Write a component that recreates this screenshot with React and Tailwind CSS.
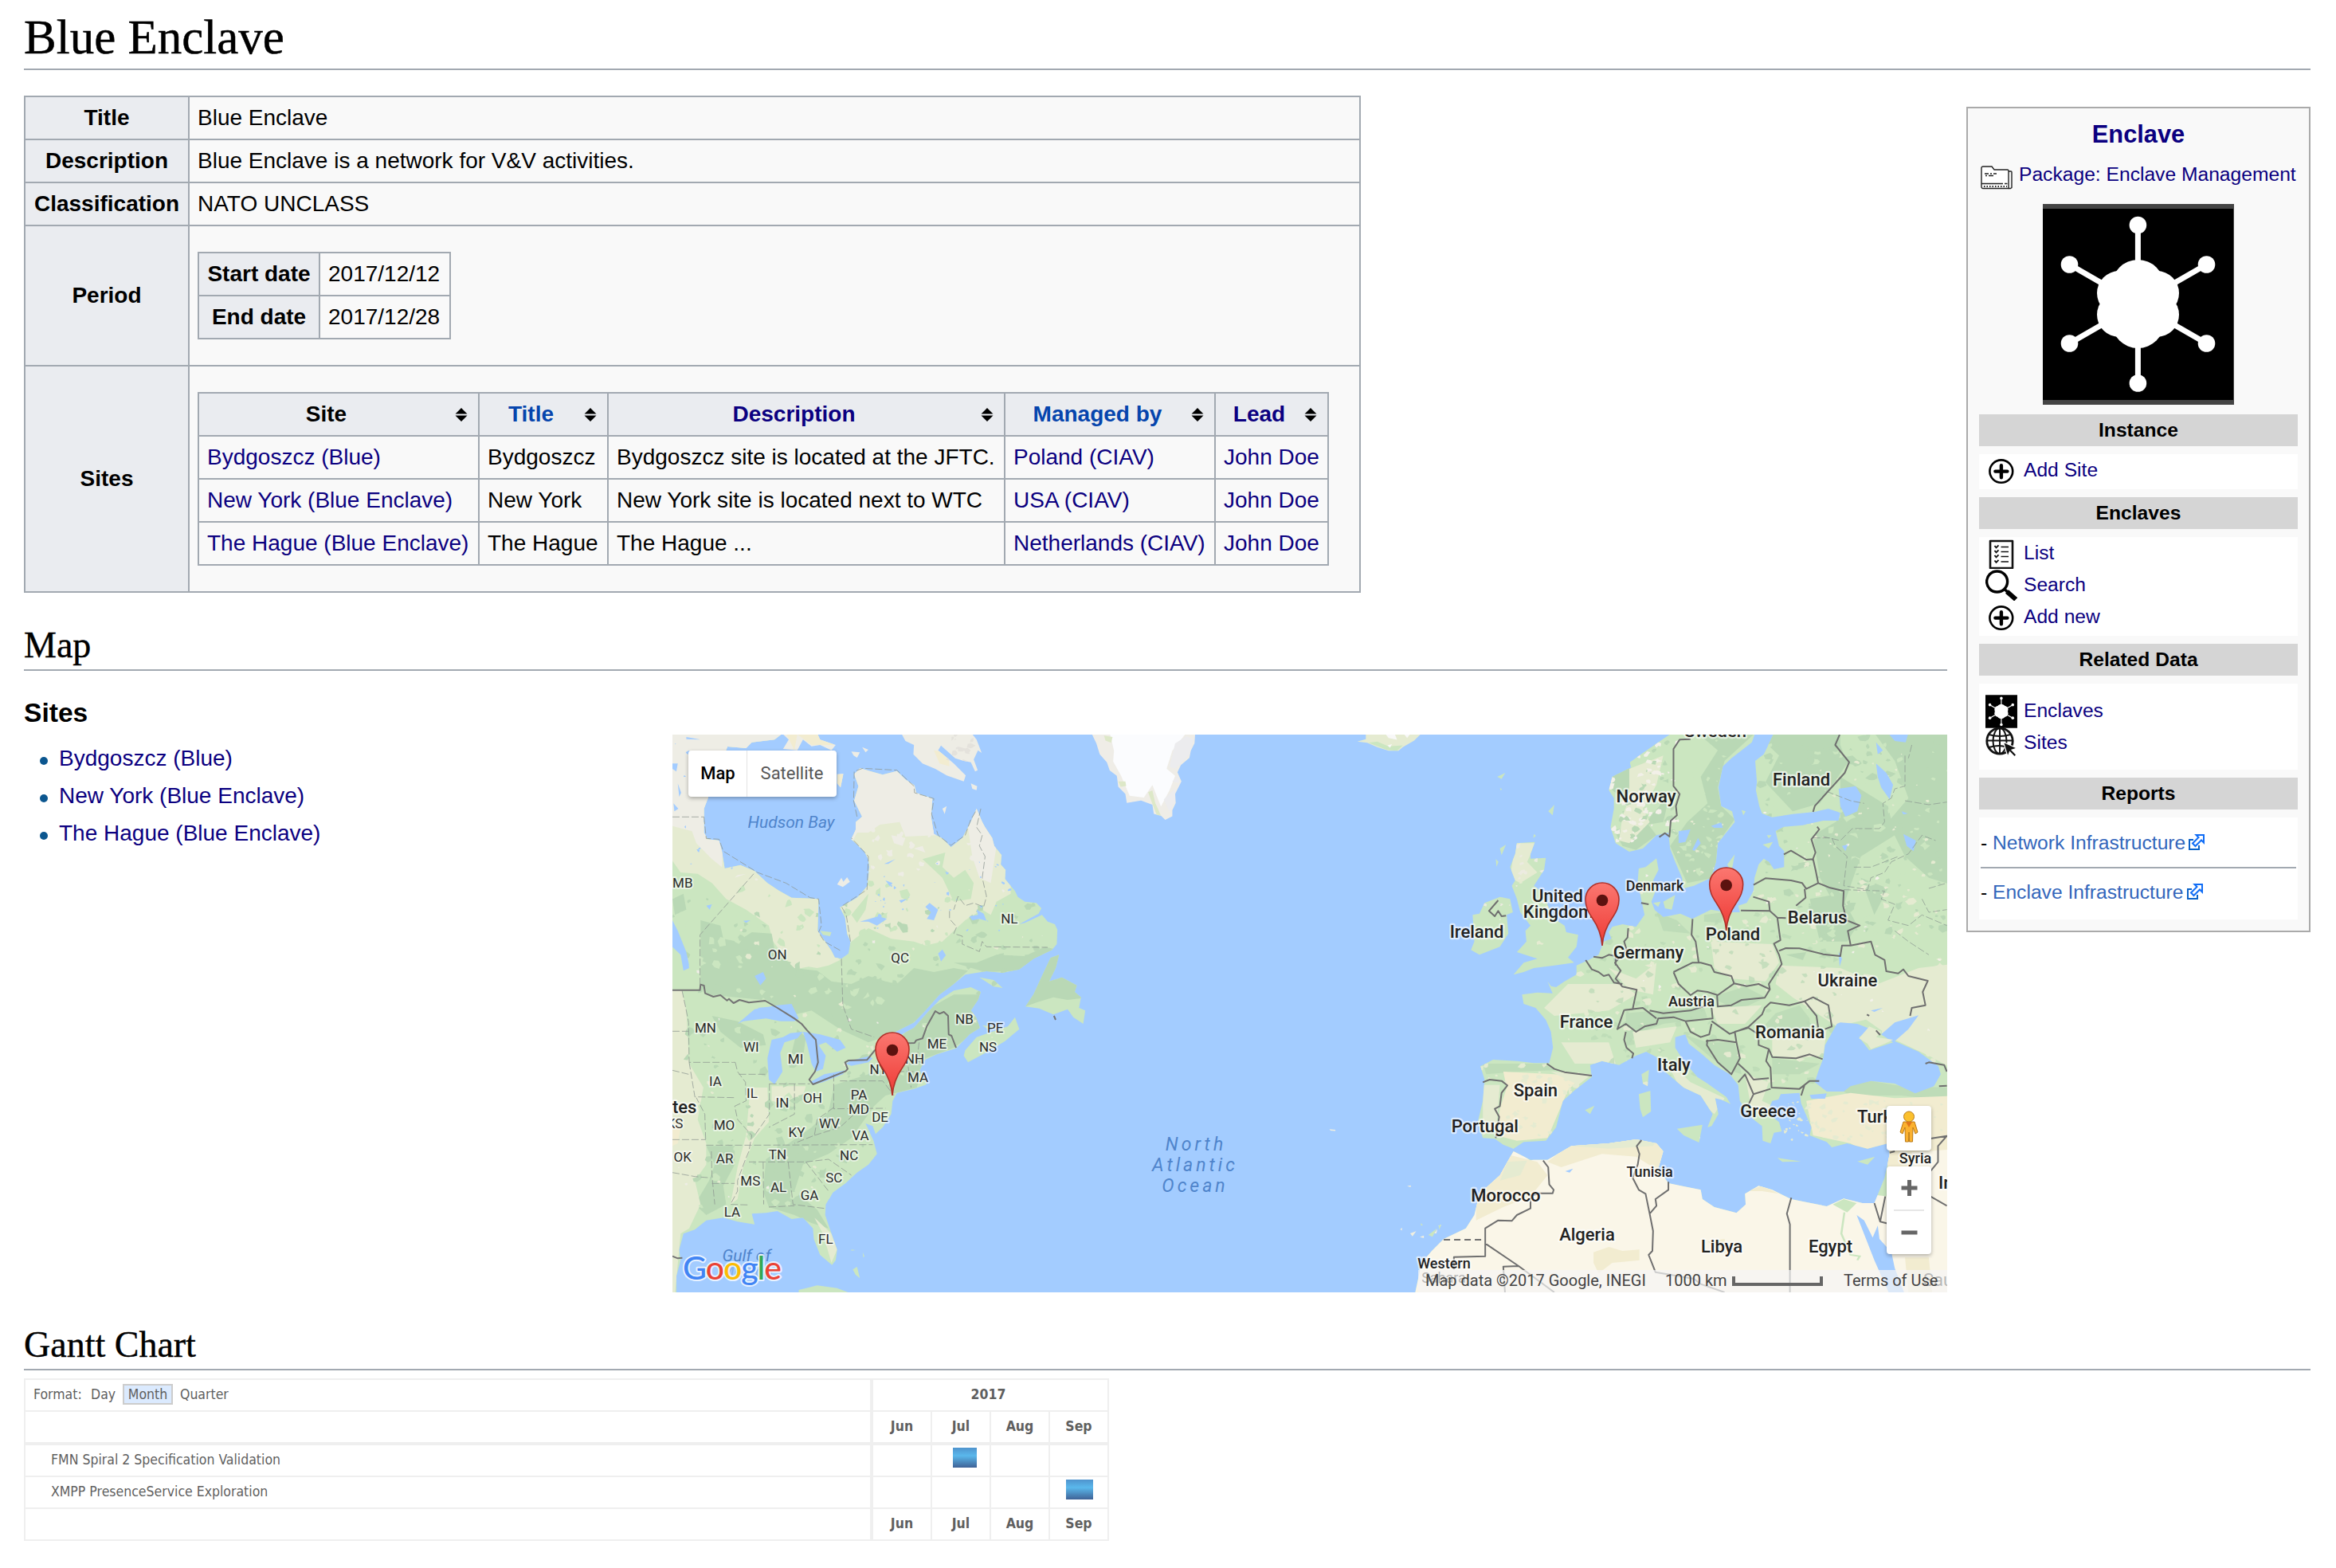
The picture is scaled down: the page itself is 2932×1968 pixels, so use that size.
import React from "react";

const SANS = "font-['Liberation_Sans',Arial,sans-serif]";
const SERIF = "font-['Liberation_Serif',Georgia,serif]";

/* ---------- small icons ---------- */

const Sorter = () => (
  <svg viewBox="0 0 16 17" className="h-[17px] w-4 shrink-0">
    <path d="M8 0L15.5 7.6H.5zM8 17L.5 9.6h15z" />
  </svg>
);

const PlusIcon = () => (
  <svg viewBox="0 0 40 40" className="h-10 w-10 shrink-0" fill="none" stroke="#000">
    <ellipse cx="19.8" cy="21.6" rx="14.4" ry="14.2" strokeWidth="2.6" />
    <path d="M12.4 21.6h15M19.9 14.2v15" strokeWidth="4.4" strokeLinecap="round" />
  </svg>
);

const ListIcon = () => (
  <svg viewBox="0 0 40 40" className="h-10 w-10 shrink-0" fill="none" stroke="#111">
    <path d="M6 5h28v34H6z" strokeWidth="2.6" strokeLinejoin="round" />
    <path d="M19.5 12.5H29M19.5 18.5H29M19.5 24.5H29M19.5 31H29" strokeWidth="1.6" />
    <path d="M11.5 11l2 2.4 3-3M11.5 17l2 2.4 3-3M11.5 23l2 2.4 3-3M11.5 29.500l2 2.400 3-3" strokeWidth="1.900" />
  </svg>
);

const SearchIcon = () => (
  <svg viewBox="0 0 40 40" className="h-10 w-10 shrink-0" fill="none" stroke="#000">
    <circle cx="14.600" cy="16" r="13" strokeWidth="3.400" />
    <path d="M24.500 26l3.500 3.300" strokeWidth="3.600" />
    <path d="M27 28.500l11.200 9.800" strokeWidth="6" />
  </svg>
);

const GlobeIcon = () => (
  <svg viewBox="0 0 40 40" className="h-10 w-10 shrink-0" fill="none" stroke="#111" strokeWidth="2">
    <circle cx="18" cy="18" r="16.200" strokeWidth="2.800" />
    <ellipse cx="18" cy="18" rx="8.500" ry="16" />
    <path d="M18 2v32M2 17.500h32M4.500 10q13.500 4 27 0M4.500 26q13.500-4 22 0" />
    <path d="M22.500 19.500l17 7.500-6.500 2.200 6 6.300-2.500 2.300-6-6.300-2.500 6z" fill="#111" stroke="#fff" strokeWidth="1.200" />
  </svg>
);

const FolderIcon = () => (
  <svg viewBox="0 0 40 30" className="h-[30px] w-10 shrink-0" fill="none" stroke="#222" strokeWidth="1.400">
    <path d="M1 26V3q0-2 2-2h11l3 4h16.500q1.500 0 1.500 1.500V28.500H3q-2 0-2-2.500z" fill="#fff" />
    <path d="M35 7h3q1 0 1 1v19.500l-1.500 1H35M1 22.500h27M30 22.500h3.500" />
    <path d="M5 10h5M12 10h2M16 10h4M6 12.500h2M10 12.500h6" />
    <path d="M4 26h29" strokeDasharray="1.500 2" strokeWidth="2.200" />
  </svg>
);

const ExternalIcon = () => (
  <svg viewBox="0 0 20 20" className="ml-1 mt-[9px] h-5 w-5 shrink-0" fill="none" strokeWidth="2">
    <path d="M6 7H1v12h12v-5" stroke="#0a62c8" />
    <path d="M9.500 1H19v9.500l-3-3-6 6-1.500 1.500-3.500-3.500L6.500 10l6-6z" stroke="#0f6cf5" fill="#fff" />
  </svg>
);

const SPOKES = [
  [119.400, 26.500], [205.500, 76], [205.500, 175], [119.400, 225], [33.500, 175], [33.500, 76],
];
const LOBES = [
  [119.400, 103, 33], [119.400, 148, 33], [119.400, 125.500, 42],
  [96, 112, 28], [143, 112, 28], [96, 139, 28], [143, 139, 28],
];

function EnclaveMark({ className }) {
  return (
    <svg viewBox="0 0 240 252" className={className} preserveAspectRatio="none">
      <path d="M0 0h240v252H0z" fill="#444" />
      <path d="M0 6h239v240H0z" />
      <g fill="#fff" stroke="#fff">
        {SPOKES.map(([x, y]) => (
          <g key={`${x}-${y}`}>
            <path d={`M119.400 125.500L${x} ${y}`} strokeWidth="7" />
            <circle cx={x} cy={y} r="10.800" stroke="none" />
          </g>
        ))}
        {LOBES.map(([x, y, r]) => (
          <circle key={`${x}-${y}`} cx={x} cy={y} r={r} stroke="none" />
        ))}
      </g>
    </svg>
  );
}

/* ---------- info table ---------- */

const TH = "border-2 border-[#a2a9b1] bg-[#eaecf0] p-0 text-center font-bold";
const TD = "border-2 border-[#a2a9b1] bg-[#f9f9f9] py-0 pl-[10px] pr-0 text-left";

const SITES = [
  ["Bydgoszcz (Blue)", "Bydgoszcz", "Bydgoszcz site is located at the JFTC.", "Poland (CIAV)"],
  ["New York (Blue Enclave)", "New York", "New York site is located next to WTC", "USA (CIAV)"],
  ["The Hague (Blue Enclave)", "The Hague", "The Hague ...", "Netherlands (CIAV)"],
];
const SITE_HEADS = [
  ["Site", "text-black"],
  ["Title", "text-[#0645ad]"],
  ["Description", "text-[#0b0080]"],
  ["Managed by", "text-[#0645ad]"],
  ["Lead", "text-[#0b0080]"],
];

function InfoTable() {
  return (
    <table className="mt-8 w-[1678px] table-fixed border-collapse whitespace-nowrap">
      <colgroup>
        <col className="w-[206px]" />
        <col />
      </colgroup>
      <tbody>
        {[
          ["Title", "Blue Enclave"],
          ["Description", "Blue Enclave is a network for V&V activities."],
          ["Classification", "NATO UNCLASS"],
        ].map(([k, v]) => (
          <tr key={k} className="h-[54px]">
            <th className={TH}>{k}</th>
            <td className={TD}>{v}</td>
          </tr>
        ))}
        <tr className="h-[176px]">
          <th className={TH}>Period</th>
          <td className="border-2 border-[#a2a9b1] bg-[#f9f9f9] py-0 pl-[10px]">
            <table className="w-[318px] table-fixed border-collapse">
              <colgroup>
                <col className="w-[152px]" />
                <col />
              </colgroup>
              <tbody>
                {[["Start date", "2017/12/12"], ["End date", "2017/12/28"]].map(([k, v]) => (
                  <tr key={k} className="h-[54px]">
                    <th className={TH}>{k}</th>
                    <td className={TD}>{v}</td>
                  </tr>
                ))}
              </tbody>
            </table>
          </td>
        </tr>
        <tr className="h-[284px]">
          <th className={TH}>Sites</th>
          <td className="border-2 border-[#a2a9b1] bg-[#f9f9f9] py-0 pl-[10px]">
            <table className="w-[1420px] table-fixed border-collapse">
              <colgroup>
                <col className="w-[352px]" />
                <col className="w-[162px]" />
                <col className="w-[498px]" />
                <col className="w-[264px]" />
                <col />
              </colgroup>
              <tbody>
                <tr className="h-[54px]">
                  {SITE_HEADS.map(([label, color]) => (
                    <th key={label} className={TH}>
                      <div className="flex items-center pl-[11px] pr-[13px]">
                        <span className={`flex-1 pr-[13px] ${color}`}>{label}</span>
                        <Sorter />
                      </div>
                    </th>
                  ))}
                </tr>
                {SITES.map(([site, title, desc, by]) => (
                  <tr key={site} className="h-[54px]">
                    <td className={`${TD} text-[#0b0080]`}>{site}</td>
                    <td className={TD}>{title}</td>
                    <td className={TD}>{desc}</td>
                    <td className={`${TD} text-[#0b0080]`}>{by}</td>
                    <td className={`${TD} text-[#0b0080]`}>John Doe</td>
                  </tr>
                ))}
              </tbody>
            </table>
          </td>
        </tr>
      </tbody>
    </table>
  );
}

/* ---------- map ---------- */

const C = {
  water: "#a3ccff",
  light: "#cbe6c0",
  dark: "#b9d8b5",
  pale: "#e5ebd1",
  tundra: "#eeede5",
  sand: "#f2ecd0",
  desert: "#faf6e8",
};

// Irregular terrain patches from a seeded generator, so every render is the same.
function patches(seed, count, [x0, y0, x1, y1], size) {
  let s = seed;
  const rnd = () => {
    s = (s * 1664525 + 1013904223) % 4294967296;
    return s / 4294967296;
  };
  let d = "";
  for (let i = 0; i < count; i++) {
    const cx = x0 + rnd() * (x1 - x0);
    const cy = y0 + rnd() * (y1 - y0);
    const r = size * (0.3 + rnd());
    const n = 5 + Math.floor(rnd() * 4);
    for (let k = 0; k < n; k++) {
      const a = (k / n) * Math.PI * 2;
      const q = r * (0.35 + rnd());
      d += `${k ? "L" : "M"}${(cx + Math.cos(a) * q).toFixed(0)} ${(cy + Math.sin(a) * q).toFixed(0)}`;
    }
    d += "Z";
  }
  return d;
}

const AMERICA =
  "M0 15L400 15L370 40L290 50L270 72L205 66L137 240L137 258L122 300L122 390L135 415L175 420L185 460L195 525L250 512L300 535L345 580L385 608L430 635L525 640L522 760L570 835L582 860L605 865L630 845L637 800L625 770L618 710L600 672L660 635L680 612L697 590L703 520L700 490L685 460L640 415L655 380L656 350L678 330L650 270L665 215L650 170L670 148L710 160L750 172L800 158L830 190L862 212L868 240L925 262L920 330L930 395L960 412L990 445L1030 410L1060 350L1080 300L1100 350L1110 370L1135 410L1142 440L1168 475L1165 510L1182 530L1180 565L1215 610L1225 632L1250 650L1290 655L1308 675L1298 695L1230 735L1250 730L1310 700L1330 725L1355 735L1364 755L1362 810L1345 832L1280 865L1230 905L1170 918L1115 912L1040 925L1000 960L950 1000L900 1060L860 1105L750 1165L800 1160L860 1125L910 1065L950 1020L1000 985L1060 972L1095 990L1085 1020L1060 1060L1078 1085L1092 1125L1055 1150L1008 1202L940 1225L900 1245L880 1285L905 1338L860 1355L800 1370L785 1400L780 1450L750 1500L725 1525L715 1495L690 1485L718 1550L730 1600L700 1640L660 1670L620 1710L575 1745L550 1790L548 1830L570 1900L590 1960L585 2000L572 2018L530 1980L508 1920L505 1880L470 1840L430 1845L380 1815L340 1822L290 1825L300 1865L240 1855L190 1840L130 1850L90 1885L50 1900L35 1960L40 2000L25 2060L25 2130L0 2130Z";
const AMERICA_ISLES =
  "M1040 1210L1080 1160L1120 1145L1190 1120L1215 1085L1230 1130L1180 1175L1110 1220L1050 1255L1035 1230ZM1340 862L1370 850L1358 900L1335 950L1380 935L1432 965L1425 990L1447 1010L1440 1050L1462 1060L1455 1110L1420 1085L1400 1055L1350 1075L1300 1052L1252 1045L1280 1000L1310 930ZM1090 935L1140 945L1172 975L1140 970ZM1100 1115L1160 1125L1120 1130ZM455 2112L520 2095L590 2105L650 2130L455 2130ZM530 760L570 765L565 780L540 775ZM640 1960L655 1962L640 1964ZM680 1970L686 1985L682 1990ZM645 2035L660 2025L670 2068L655 2055Z";
const BAFFIN =
  "M815 15L830 45L860 60L858 95L890 130L935 150L975 175L1035 197L1042 175L1000 130L945 80L955 62L1005 110L1035 120L1060 125L1075 160L1084 155L1070 115L1085 80L1098 90L1080 40L1062 15ZM640 85L670 88L660 108L648 100ZM678 68L700 78L690 88ZM590 170L612 168L602 220L590 205ZM395 15L520 15L530 40L585 60L570 80L530 60L500 65L470 40L450 80L400 75L420 40ZM960 300L975 290L968 320ZM1060 205L1082 215L1080 230L1065 225ZM590 585L605 560L612 575L625 558L635 575L610 595Z";
const LAKES =
  "M240 1110L300 1055L380 1040L430 1035L455 1090L440 1100L390 1100L340 1090L300 1095L260 1100ZM345 1240L360 1170L400 1160L425 1145L470 1140L450 1165L405 1180L390 1220L398 1290L370 1338L350 1320ZM470 1140L530 1150L600 1170L620 1200L590 1215L550 1180L525 1190L550 1230L540 1280L515 1290L500 1260L485 1190ZM495 1330L545 1300L620 1285L610 1300L540 1330L510 1338ZM620 1260L640 1248L700 1232L715 1240L700 1255L640 1268ZM300 930L330 915L340 940L320 965ZM11 720L30 760L60 840L70 900L50 910L40 850L11 820ZM900 670L915 655L945 680L930 720L905 715L920 690ZM1055 705L1085 700L1080 680L1105 695L1115 722L1090 715L1065 720ZM670 725L735 705L765 715L730 740L700 725ZM945 845L960 830L972 852L955 875ZM808 645L836 640L815 655ZM755 508L795 490L770 508ZM760 570L785 580L775 592ZM11 130L30 130L25 160L11 150ZM30 205L42 240L35 255ZM15 280L32 300L18 310ZM60 30L110 40L60 38ZM130 665L150 660L142 680ZM260 722L285 720L270 730ZM47 870L62 850L70 890ZM310 1050L360 1045L330 1060Z";

const EURASIA =
  "M1045 15L1025 70L1015 95L990 120L995 200L992 230L1002 290L1010 318L1040 332L1100 320L1165 312L1205 300L1240 315L1235 345L1190 345L1130 362L1075 368L1050 385L1060 440L1075 460L1075 520L1045 528L1030 500L1015 488L1000 510L988 560L985 610L965 655L940 665L945 690L905 690L860 680L805 715L770 695L720 708L695 682L685 650L700 600L690 570L706 530L700 487L668 520L648 525L645 570L655 640L665 700L640 745L600 735L570 745L560 765L568 790L545 800L530 850L500 870L465 890L465 925L430 950L405 972L390 968L380 950L395 995L350 992L305 1000L310 1035L345 1050L375 1095L390 1140L396 1200L385 1258L340 1258L290 1250L220 1245L183 1270L195 1320L190 1400L175 1480L190 1540L225 1543L250 1565L280 1580L310 1555L375 1550L405 1500L425 1400L460 1360L510 1310L505 1265L540 1250L590 1265L640 1230L670 1215L700 1235L725 1290L780 1350L830 1380L865 1450L850 1500L862 1495L882 1450L872 1390L890 1395L918 1412L905 1385L850 1335L820 1310L780 1250L755 1200L755 1160L785 1150L795 1185L830 1220L870 1265L915 1300L940 1340L945 1400L965 1440L985 1470L1010 1495L1012 1550L1035 1560L1045 1520L1068 1515L1060 1480L1025 1445L1040 1400L1058 1395L1065 1375L1120 1370L1125 1410L1135 1440L1155 1500L1150 1530L1200 1555L1215 1575L1260 1560L1320 1580L1380 1560L1385 1600L1370 1690L1340 1785L1305 1785L1250 1768L1200 1797L1095 1770L1040 1735L1000 1720L960 1750L962 1790L935 1822L870 1800L835 1770L830 1735L780 1722L735 1710L705 1655L720 1590L700 1560L640 1545L560 1560L450 1570L380 1622L330 1622L280 1590L262 1630L240 1680L180 1750L165 1830L140 1880L75 1920L40 1965L10 2010L-10 2130L1600 2130L1600 15Z";
const SCANDINAVIA =
  "M745 15L700 55L660 90L622 125L625 145L570 180L560 230L575 260L575 300L565 370L580 430L620 462L660 450L700 400L735 390L740 450L755 500L775 560L780 600L810 590L860 560L875 500L880 430L930 350L922 310L890 290L882 220L895 140L920 110L980 50L990 15Z";
const EURO_ISLES =
  "M290 430L343 425L330 470L330 488L375 485L370 530L340 590L370 620L385 680L400 715L430 740L435 765L470 775L465 820L440 860L458 880L400 890L340 900L310 915L280 925L310 880L350 865L290 840L318 800L315 760L330 740L300 690L290 640L275 590L285 570L270 520L285 470ZM195 655L240 632L270 640L278 690L260 700L265 770L240 820L180 850L155 832L165 800L160 700L180 695ZM240 450L258 435L245 475ZM228 490L236 500L230 518ZM340 395L346 402L338 410ZM232 180L256 165L245 188ZM382 310L400 285L395 325ZM240 222L246 226L243 232ZM760 1505L835 1490L825 1557L780 1530ZM648 1375L682 1362L684 1440L660 1462L652 1430ZM656 1300L678 1283L674 1345L660 1335ZM1055 1615L1125 1628L1070 1630ZM1290 1628L1342 1610L1320 1640ZM720 650L755 625L745 680L725 675ZM908 510L930 472L920 540ZM1012 435L1042 425L1030 450ZM1024 400L1038 400L1030 412ZM490 1435L518 1418L505 1450ZM950 305L962 310L955 325ZM690 655L712 650L705 670ZM8 1860L14 1868L8 1870ZM30 1905L55 1880L42 1912ZM60 1870L68 1865L62 1885Z";
const INLAND_SEAS =
  "M1230 1110L1240 1105L1290 1110L1330 1130L1295 1160L1325 1210L1395 1180L1360 1150L1400 1105L1470 1078L1440 1130L1400 1175L1470 1215L1528 1270L1535 1300L1515 1345L1460 1372L1400 1335L1330 1325L1270 1345L1250 1365L1200 1365L1165 1330L1175 1290L1190 1240L1195 1190ZM1150 1378L1200 1372L1195 1392L1155 1392ZM1288 1830L1310 1850L1335 1915L1350 1870L1355 1920L1390 1970L1400 2030L1430 2130L1385 2130L1340 2000ZM1235 225L1285 215L1302 250L1290 310L1255 330L1240 290ZM1345 130L1375 165L1395 210L1385 265L1360 220L1350 180ZM1380 15L1440 15L1432 50L1400 45ZM1345 50L1365 80L1350 95ZM1425 395L1462 420L1455 460L1435 440ZM1245 440L1262 435L1255 460ZM1420 310L1438 318L1425 322ZM765 385L800 378L785 425L765 430ZM805 455L822 410L830 430L812 458ZM860 365L890 352L895 372L870 372ZM1235 840L1245 865L1238 895ZM1330 1060L1365 1050L1340 1065ZM432 1665L455 1655L445 1670Z";

const EURO_BORDERS =
  "M800 38L768 40L750 75L750 215L768 245L757 290L760 325L742 345L738 405L725 392L708 407M1238 21L1225 60L1266 125L1253 165L1165 290L1160 312M1172 368L1178 378L1155 415L1167 465L1158 495M1074 472L1095 458L1140 492L1160 490L1168 535L1175 580L1140 602L1128 580L1095 570L1020 562L985 587M1135 602L1138 635L1110 665M984 632L1030 650L1033 685L948 683M1033 685L1055 710L1080 712M1055 710L1064 795L1045 808L1060 850L1068 885L1030 960L1033 980M1175 580L1210 598L1250 610L1248 665L1258 720L1297 740L1262 760L1270 812M1060 835L1080 825L1120 826L1190 848L1240 855L1245 815L1270 815L1330 800L1342 850L1370 870L1375 912L1410 920L1425 905L1440 930L1497 948L1482 990L1490 1040L1450 1050L1445 1080M806 715L803 775L815 800L824 880M750 915L805 880L830 880L860 890L870 915L920 930L928 958L880 1002L850 990L820 985L800 1002L765 960L750 915M928 958L965 968L1000 960L1033 980L1018 1012L950 1020L920 1040L880 1045L878 1002M617 750L615 785L605 800L612 830L578 880L595 910L580 940L600 970L642 982L630 1055L605 1058M515 857L540 862L560 850L580 855L580 890M492 870L510 905L530 915L545 930L560 925L575 955L600 960M655 655L677 660M605 1058L585 1130L610 1110L640 1140L665 1120L700 1110L705 1090L750 1085L785 1100L865 1090L862 1050M680 1060L720 1070L800 1060L850 1040M610 1140L605 1170L612 1200L632 1222L628 1240M605 1058L660 1050L680 1070L700 1090M785 1100L800 1140L830 1160L855 1150L862 1110M862 1100L915 1148L970 1122L1010 1075L1018 1050L1035 1030L1090 1040L1135 1025L1170 1080L1175 1125M1135 1025L1160 1010L1205 1040L1215 1120L1195 1130M845 1175L880 1170L935 1180L945 1240L920 1300L880 1255L848 1190L850 1170M935 1180L930 1140L970 1125L1000 1150L1000 1190L1030 1205L1040 1235L1110 1240L1150 1225L1188 1243M1030 1205L1022 1250L1035 1275L1038 1350L1120 1355L1150 1325L1178 1325M1120 1355L1135 1340L1125 1380M940 1260L970 1295L985 1320L1030 1315M940 1330L960 1300L975 1345L985 1375L1035 1355M985 1375L970 1415M378 1260L400 1280L430 1292L510 1305M190 1330L210 1320L245 1325L262 1342L245 1370L240 1420L225 1430L238 1460L228 1540M235 645L208 685L225 705L235 685L245 705L258 703M367 1625L382 1650L385 1715L398 1735L395 1748L355 1748L330 1760L330 1805L290 1830L275 1852L235 1850L197 1880L197 1985L105 1988L105 2035M197 1937L295 2022L400 2121M295 2022L250 2024L255 2121M656 1548L642 1570L650 1600L645 1640L630 1690L648 1735L668 1750L680 1825L690 1890L688 1965L677 1980L697 2045L810 2070L830 2090L900 2121M735 1705L735 1735L697 1770L700 1795L680 1825M1096 1765L1083 1825L1092 1865L1092 2121M1385 1595L1400 1590M1340 1785L1357 1855L1372 1760M1357 1855L1380 1862M1505 1542L1553 1532L1527 1570L1527 1630L1505 1665M1505 1760L1553 1795M1490 1260L1500 1255L1545 1265L1553 1290M1530 1345L1553 1343M1345 1135L1357 1152M1318 1075L1325 1080";
const EURO_ADMIN =
  "M1430 100L1430 215L1400 225L1390 260L1365 280L1370 350L1355 375L1275 375L1240 420L1190 405M1200 235L1270 270L1310 280M1430 270L1500 285L1553 275M1160 410L1215 410L1225 440L1260 480L1250 590L1320 605L1330 560L1370 540L1390 500L1440 470L1480 400L1520 420M1250 605L1370 610L1360 640L1400 660L1380 720L1440 740L1480 700L1553 740M1280 520L1330 520L1410 480M1400 760L1440 800L1500 850M1450 60L1440 110M1500 600L1553 580M1480 640L1500 690L1553 680";

const AMERICA_BORDERS =
  "M11 983L108 983L110 962L122 966L126 995L155 1008L180 1002L203 1022L210 1016L226 1032L247 1020L280 1030L337 1023L380 1050L440 1090L465 1110L485 1135L515 1170L523 1255L512 1290L492 1320L505 1338L620 1288L627 1280L618 1255L630 1248L695 1246L722 1210L760 1185L862 1182L868 1172L890 1165L905 1120L935 1062L950 1072L965 1065L980 1080L982 1150L992 1155L1008 1200M11 1985L30 1993L46 1991M1352 1080L1358 1095";
const AMERICA_ADMIN =
  "M11 331L122 331M297 545L108 775L108 960M45 985L58 1050L68 1105L70 1255L232 1255M70 1255L90 1385L232 1388M11 1138L68 1138M11 1285L68 1300M128 1545L125 1450L95 1388M11 1546L128 1546M130 1567L290 1567L715 1565M232 1255L240 1290L268 1330L270 1400L230 1420L240 1470L290 1530L280 1590L268 1620L240 1700L240 1740L215 1790L280 1792M245 1300L340 1300M352 1335L352 1450L300 1530M352 1336L495 1336M440 1336L440 1450L350 1500M600 1325L750 1325L790 1380M578 1300L578 1430L760 1428M578 1425L520 1470L510 1530L440 1560M510 1530L600 1500L680 1420M150 1711L230 1711M148 1590L150 1680L160 1790M330 1630L332 1790M418 1630L435 1790L545 1805M280 1630L480 1630L560 1740M480 1630L560 1620L640 1680M350 1800L440 1795M605 865L610 1040L640 1130L720 1160M878 1180L870 1250L900 1260M830 1200L850 1350M800 1290L870 1290M11 1670L90 1685L145 1690M985 685L985 715L1010 745L1000 770L1030 780L1030 810L1090 838L1100 800L1115 820L1330 822M1095 300L1080 370L1100 400L1090 440L1110 480L1100 560L1115 630L1105 670L1070 655L1040 665L1015 630L1000 680M660 330L648 270L650 160L680 148L800 155L860 215L862 240L930 262L922 320L945 400L990 438L1040 400L1060 340L1080 305M122 331L130 412L175 415L190 460L310 540L410 580L495 635L525 640L535 740L525 765L545 800L603 835M637 800L622 700L605 668L695 605L700 480L640 410";

const STATES = [
  ["MB", 12.8, 192], ["ON", 131.7, 282], ["QC", 285.6, 286], ["NL", 422.8, 237], ["MN", 41.4, 374],
  ["WI", 98.9, 398], ["MI", 154.6, 413], ["NB", 366.4, 363], ["PE", 405.3, 374], ["NS", 396, 398],
  ["ME", 332, 394], ["NH", 304, 413], ["NY", 258.5, 426], ["MA", 308, 436], ["IA", 54, 441],
  ["IL", 100, 456], ["IN", 138, 468], ["OH", 176, 462], ["PA", 234, 458], ["MD", 234, 476],
  ["DE", 260.6, 486], ["KS", 3, 494], ["MO", 65, 496], ["KY", 156, 505], ["WV", 197, 494],
  ["VA", 236, 509], ["OK", 12.8, 536], ["AR", 65.6, 538], ["TN", 132, 533], ["NC", 221.7, 534],
  ["MS", 97.8, 566], ["AL", 133, 574], ["SC", 202.8, 562], ["GA", 172, 584], ["LA", 75, 605],
  ["FL", 192.4, 639],
];
const COUNTRIES = [
  ["Sweden", 1309, 3], ["Norway", 1222, 85], ["Finland", 1417, 64], ["United", 1111, 210],
  ["Kingdom", 1112, 230], ["Ireland", 1009.5, 255], ["Germany", 1225, 281], ["Poland", 1331, 258],
  ["Belarus", 1437, 237], ["Ukraine", 1475, 316], ["France", 1147, 368], ["Romania", 1402.6, 381],
  ["Italy", 1257, 422], ["Spain", 1083.4, 454], ["Portugal", 1019.8, 498.7], ["Greece", 1375, 480],
  ["Turkey", 1520, 487], ["Morocco", 1045.8, 586], ["Algeria", 1148, 635], ["Libya", 1317, 649.7],
  ["Egypt", 1453.5, 649.7], ["Iraq", 1608, 570],
];
const SMALL_COUNTRIES = [
  ["Denmark", 1233, 196], ["Austria", 1279, 341], ["Syria", 1560, 538], ["Tunisia", 1226.6, 555],
  ["Western", 968.5, 670],
];
const PINS = [["ny", 276, 453], ["hague", 1167, 265], ["poland", 1322.7, 246]];

function MapCanvas() {
  return (
    <svg viewBox="0 0 1600 700" className="absolute inset-0 h-[700px] w-[1600px]">
      <defs>
        <clipPath id="america"><path d={AMERICA + AMERICA_ISLES} /></clipPath>
        <clipPath id="baffin"><path d={BAFFIN} /></clipPath>
        <clipPath id="eurasia"><path d={EURASIA} /></clipPath>
        <clipPath id="scandinavia"><path d={SCANDINAVIA} /></clipPath>
        <clipPath id="isles"><path d={EURO_ISLES} /></clipPath>
        <linearGradient id="pin" x1="0" y1="0" x2="0" y2="1">
          <stop offset="0" stopColor="#fb7770" />
          <stop offset="1" stopColor="#ee3a35" />
        </linearGradient>
      </defs>
      <path d="M0 0h1600v700H0z" fill={C.water} />

      {/* North America */}
      <g transform="translate(-4 -7) scale(.35714 .33333)">
        <path d={AMERICA + AMERICA_ISLES} fill={C.light} />
        <g clipPath="url(#america)">
          <path d="M0 0H700V640H525L522 760L600 870L560 890L520 900L490 895L440 905L400 850L365 800L350 740L270 680L200 640L150 580L100 545L40 540L0 480Z" fill={C.pale} />
          <path d="M600 300H1200V620L1150 650L1130 700L1100 680L1040 720L1000 760L960 800L900 815L860 800L780 790L700 750L640 800L600 870Z" fill={C.pale} />
          <path d="M0 0H400V240L130 290L130 415L190 420L185 520L150 490L95 430L80 385L11 365Z" fill={C.tundra} />
          <path d="M640 130H940V400L830 405L810 350L740 360L700 390L660 390L640 430ZM1040 300H1140L1150 440L1130 580L1090 560L1065 480ZM240 550L270 545L230 560ZM860 450L890 440L900 465ZM780 400L830 410L820 440L790 430Z" fill={C.tundra} />
          <path d="M890 490L970 465L960 520L1000 560L1040 530L1070 580L1060 640L1000 650L960 560ZM640 700L700 620L690 680L660 730Z" fill={C.light} />
          <path d="M110 720L180 740L190 790L240 800L290 765L360 770L370 830L440 900L520 910L570 950L640 960L700 930L760 950L800 960L860 900L930 915L1000 900L1050 910L1000 960L860 1120L780 1150L700 1180L600 1130L500 1060L420 1080L330 1020L130 1000L110 960Z" fill={C.dark} />
          <path d="M1000 880L1080 880L1150 850L1250 855L1320 820L1360 830L1250 910L1110 915Z" fill={C.dark} />
          <path d="M1250 850H1480V1010L1400 1020L1350 1010L1290 1030L1240 1050Z" fill={C.dark} />
          <path d="M900 1060L1000 1000L1090 1000L1090 1130L1000 1200L900 1240L870 1350L760 1380L720 1420L640 1540L560 1600L470 1640L440 1740L520 1810L560 1880L500 1860L440 1830L350 1800L330 1740L340 1620L420 1560L500 1500L560 1440L580 1340L700 1300L780 1200Z" fill={C.dark} />
          <path d="M130 1570L230 1570L230 1640L190 1720L200 1790L130 1830L90 1790L140 1700L160 1640ZM150 1080L240 1100L330 1150L340 1190L250 1200L180 1140ZM450 1130L480 1160L470 1240L430 1220ZM11 640L50 620L60 680L20 700Z" fill={C.dark} />
          <path d="M0 985L45 985L60 1060L70 1260L120 1350L100 1470L130 1560L130 1640L90 1700L110 1790L70 1880L40 1900L20 2130H0ZM285 1350L345 1350L350 1480L300 1540L260 1650L240 1770L215 1790L240 1650L270 1530ZM360 1345L480 1345L470 1380L400 1410L360 1400ZM510 1840L570 1900L590 1960L570 2010L540 1900Z" fill={C.pale} />
          <path d="M11 1480L40 1500L30 1560L11 1570Z" fill={C.sand} />
          <path d={patches(7, 60, [11, 560, 1000, 900], 16)} fill={C.light} />
          <path d={patches(11, 80, [11, 640, 1350, 1000], 13)} fill={C.dark} />
          <path d={patches(21, 80, [100, 900, 900, 1800], 14)} fill={C.light} />
          <path d={patches(5, 60, [60, 1080, 700, 1750], 17)} fill={C.dark} />
          <path d={patches(39, 60, [100, 560, 1350, 1850], 8)} fill={C.pale} />
          <path d={patches(51, 30, [0, 560, 1350, 1850], 6)} fill={C.tundra} />
          <path d={patches(3, 26, [640, 350, 1200, 560], 12)} fill={C.tundra} />
          <path d={patches(93, 34, [680, 480, 1200, 760], 5)} fill={C.water} />
          <path d={patches(17, 24, [11, 40, 400, 540], 7)} fill={C.water} />
        </g>
        <path d={LAKES} fill={C.water} />
        <path d={BAFFIN} fill={C.tundra} />
        <g clipPath="url(#baffin)">
          <path d="M410 15H530L580 60L500 60L450 20L440 80ZM930 80L980 90L985 140L950 130ZM590 170H615V220H590Z" fill={C.sand} />
          <path d={patches(8, 14, [980, 20, 1090, 130], 12)} fill="#e4e2dc" />
        </g>
        <g fill="none" stroke="#8c9690" strokeOpacity=".75" strokeWidth="1">
          <path d={AMERICA_ADMIN} strokeDasharray="9 3" vectorEffect="non-scaling-stroke" />
        </g>
        <path d={AMERICA_BORDERS} fill="none" stroke="#747474" strokeWidth="2" strokeLinejoin="round" vectorEffect="non-scaling-stroke" />
      </g>

      {/* Greenland and Iceland */}
      <g transform="translate(456 -7) scale(.35714 .4528)">
        <path d="M195 10L213 40L225 70L250 92L260 115L285 130L290 160L315 180L320 205L370 198L410 210L415 235L440 240L455 252L480 242L480 225L492 205L490 180L512 145L498 120L510 100L540 80L545 60L558 40L560 15L550 10Z" fill="#efede7" />
        <path d="M260 10L275 60L272 90L300 130L330 185L380 190L410 155L440 215L470 170L490 130L460 110L480 60L530 10Z" fill="#fbfcfe" />
        <path d="M490 40L530 20L555 30L540 70L510 95L490 110L470 105ZM450 195L490 165L490 200L470 230ZM480 145L500 130L505 150Z" fill="#ececee" />
        <path d="M240 18L270 22L265 38L245 32ZM290 145L315 145L318 158L298 160ZM395 175L410 170L420 205L440 240L425 238L412 212Z" fill="#dde8c8" />
        <path d="M1130 35L1165 38L1200 50L1240 60L1275 60L1290 50L1330 32L1352 15V10H1160V28Z" fill={C.pale} />
        <path d="M1170 38L1200 35L1240 48L1290 45L1270 60L1235 58Z" fill={C.light} />
        <path d="M1225 10L1260 10L1270 30L1240 25ZM1290 10H1320L1305 25ZM1236 45L1252 42L1245 52Z" fill="#f8f8f8" />
        <path d="M1032 1109L1053 1111L1053 1114L1036 1113ZM1305 1267L1318 1265L1318 1270ZM1281 1387L1287 1382L1287 1390ZM1316 1398L1337 1392L1324 1406ZM1350 1408L1364 1404L1364 1411ZM1400 1398L1412 1386L1408 1398ZM1414 1377L1425 1374L1422 1379Z" fill="#f1efe0" />
      </g>

      {/* Europe, North Africa and the Near East */}
      <g transform="translate(936 -7) scale(.4273 .33333)">
        <path d={EURASIA + EURO_ISLES} fill={C.light} />
        <g clipPath="url(#eurasia)">
          <path d="M990 15H1240L1240 60L1260 130L1180 280L1100 310L1020 200L1060 100ZM1240 180L1380 290L1400 400L1300 480L1240 700L1180 560L1160 400L1240 340ZM1340 15H1600V600L1500 560L1430 480L1380 350L1440 260L1400 120ZM1150 640L1240 620L1290 740L1260 800L1180 800ZM1080 850L1140 840L1130 870ZM1300 560L1380 600L1340 700Z" fill={C.dark} />
          <path d="M700 690L760 720L800 770L720 760ZM840 700L900 690L890 730L840 725ZM860 1010L960 970L1020 1010L940 1060ZM1050 1070L1120 1040L1150 1090L1150 1160L1040 1160L1000 1140ZM610 1070L700 1060L840 1050L850 1090L720 1110L640 1150L612 1200ZM780 1150L850 1180L930 1180L950 1300L900 1280ZM1040 1240L1180 1260L1120 1300L1040 1300ZM190 1260L370 1260L400 1285L290 1290L200 1300ZM1230 1350L1330 1325L1420 1345L1553 1350L1553 1400L1420 1380L1270 1380Z" fill={C.dark} opacity=".75" />
          <path d="M860 800L1040 810L1060 880L1020 950L920 940L870 900ZM1060 890L1240 900L1350 960L1470 900L1600 880V1120L1440 1110L1330 1090L1230 1120L1100 1010L1050 960ZM440 960L600 960L640 1000L560 1060L400 1080L370 1050ZM630 1140L760 1120L740 1180L640 1200ZM860 1050L1010 1040L960 1110L880 1110ZM1040 1150L1200 1130L1190 1230L1110 1240L1040 1230ZM420 1180L560 1180L580 1260L460 1260ZM560 900L640 940L700 880L690 1000L620 980ZM725 1240L800 1330L900 1390L870 1450L760 1330ZM960 1300L1030 1330L1010 1400L1060 1430L980 1440ZM1300 1080H1480L1600 1100V1300L1500 1230L1400 1170Z" fill={C.pale} />
          <path d="M250 1290L400 1300L480 1310L440 1360L420 1420L380 1540L290 1550L230 1530L240 1430L260 1350ZM1140 1400L1270 1370L1400 1390L1600 1380V1640H1380L1270 1560L1160 1530Z" fill={C.sand} />
          <path d="M190 1340L240 1340L230 1500L190 1530ZM390 1290L510 1300L470 1340Z" fill={C.pale} />
          <path d="M-40 1580H280L330 1625L450 1560L640 1540L730 1550V1680L1000 1700L1380 1760V1600L1600 1580V2130H-40Z" fill={C.desert} />
          <path d="M255 1600L350 1630L380 1680L330 1760L250 1800L170 1850L170 1740L240 1680ZM380 1630L450 1560L640 1540L720 1550L715 1660L690 1650L640 1610L540 1600L420 1650ZM515 1970L560 1950L600 1965L650 1960L650 2000L570 2010L530 2050L515 2010ZM850 1930L900 1920L910 1980L880 1960ZM965 1740L1010 1720L1060 1750L1010 1740ZM1380 1540H1450V1650L1380 1720ZM1430 1990L1500 1990L1510 2121H1440Z" fill={C.sand} />
          <path d="M262 1630L320 1625L300 1680L240 1700ZM450 1570L640 1545L700 1550L690 1570L560 1580Z" fill={C.pale} />
          <path d="M1218 1790L1250 1770L1288 1785L1260 1820Z" fill={C.light} />
          <path d="M1252 1820L1243 1900L1270 1980L1297 1985L1290 2000" fill="none" stroke={C.light} strokeWidth="6" />
          <path d={patches(61, 130, [480, 700, 1250, 1330], 12)} fill={C.dark} opacity=".7" />
          <path d={patches(62, 130, [400, 560, 1600, 1330], 11)} fill={C.pale} />
          <path d={patches(63, 90, [1000, 20, 1600, 800], 13)} fill={C.light} />
          <path d={patches(64, 120, [1000, 20, 1600, 800], 14)} fill={C.dark} />
          <path d={patches(65, 50, [1100, 60, 1600, 800], 6)} fill={C.pale} />
          <path d={patches(67, 36, [600, 300, 1600, 1200], 5)} fill="#f3f1ea" />
          <path d={patches(71, 50, [180, 1260, 500, 1540], 9)} fill={C.pale} />
          <path d={patches(72, 50, [1140, 1400, 1553, 1560], 9)} fill={C.pale} />
        </g>
        <path d={SCANDINAVIA} fill={C.light} />
        <g clipPath="url(#scandinavia)">
          <path d="M820 15H990L900 120L880 220L890 290L930 340L880 430L870 560L790 580L740 440L790 350L850 280L830 180L880 80ZM570 170L620 140L650 200L600 260L570 230ZM575 380L600 440L640 455L700 400L670 350L740 240L720 350Z" fill={C.dark} />
          <path d="M620 150L720 100L700 210L660 300L680 350L620 430L590 420L600 330L620 260Z" fill={C.pale} />
          <path d={patches(81, 70, [560, 40, 760, 430], 10)} fill="#f2f0e8" />
          <path d={patches(82, 50, [560, 40, 760, 450], 9)} fill={C.dark} />
          <path d={patches(83, 36, [740, 40, 940, 580], 10)} fill={C.light} />
          <path d={patches(84, 20, [740, 340, 930, 560], 6)} fill={C.pale} />
        </g>
        <g clipPath="url(#isles)">
          <path d="M285 430H345L320 500L350 540L300 580L270 560Z" fill={C.pale} />
          <path d={patches(85, 24, [190, 430, 380, 720], 9)} fill="#ecebe0" />
          <path d={patches(86, 16, [190, 540, 460, 900], 9)} fill={C.pale} />
          <path d={patches(87, 26, [640, 1280, 840, 1560], 10)} fill={C.pale} />
        </g>
        <path d={INLAND_SEAS} fill={C.water} />
        <path d="M1325 1120L1360 1140L1345 1160L1395 1170L1370 1185L1330 1205L1320 1185L1295 1165Z" fill={C.pale} />
        <path d={patches(90, 26, [1070, 1400, 1150, 1570], 5)} fill={C.pale} />
        <path d={EURO_ADMIN} fill="none" stroke="#8c9a92" strokeOpacity=".75" strokeDasharray="9 3" strokeWidth="1" vectorEffect="non-scaling-stroke" />
        <path d={EURO_BORDERS} fill="none" stroke="#6f6f6f" strokeWidth="2" strokeLinejoin="round" vectorEffect="non-scaling-stroke" />
        <path d="M75 1923H197" fill="none" stroke="#6f6f6f" strokeWidth="2" strokeDasharray="8 5" vectorEffect="non-scaling-stroke" />
      </g>

      {/* Labels */}
      <g fontFamily="Roboto, sans-serif" textAnchor="middle" paintOrder="stroke" strokeLinejoin="round">
        <g fill="#2b2b2b" stroke="#fff" strokeOpacity=".55" strokeWidth="4" fontSize="17">
          {STATES.map(([t, x, y]) => <text key={t} x={x} y={y}>{t}</text>)}
        </g>
        <g fill="#222" stroke="#fff" strokeOpacity=".6" strokeWidth="4.500" fontWeight="500">
          <text x="0" y="475" fontSize="22" textAnchor="start">tes</text>
          <g fontSize="22">
            {COUNTRIES.map(([t, x, y]) => <text key={t} x={x} y={y}>{t}</text>)}
          </g>
          <g fontSize="18">
            {SMALL_COUNTRIES.map(([t, x, y]) => <text key={t} x={x} y={y}>{t}</text>)}
          </g>
        </g>
        <g fill="#222" fontSize="18">
          <text x="968" y="688">Sahara</text>
          <text x="1570" y="692" fontSize="22" textAnchor="start">Saudi</text>
        </g>
        <g fill="#4f84cb" fontStyle="italic" fontSize="21">
          <text x="149" y="117">Hudson Bay</text>
          <text x="93" y="661">Gulf of</text>
          <text x="93" y="681" opacity=".35">Mexico</text>
          <g fontSize="23" letterSpacing="4">
            <text x="657" y="522">North</text>
            <text x="656" y="548">Atlantic</text>
            <text x="656" y="574">Ocean</text>
          </g>
        </g>
      </g>

      {/* Site markers */}
      {PINS.map(([id, x, y]) => (
        <g key={id} transform={`translate(${x} ${y})`}>
          <path d="M0 0C-1-14-5-24-12-34C-18-43-21-49-21-58A21 21 0 0 1 21-58C21-49 18-43 12-34C5-24 1-14 0 0Z" fill="url(#pin)" stroke="#b03129" strokeWidth="1.600" />
          <circle cx="0" cy="-57" r="7.300" fill="#5c120f" />
        </g>
      ))}

      {/* Logo */}
      <text x="13" y="684" fontFamily="Lato, sans-serif" fontSize="41" fontWeight="500" textLength="124" strokeWidth="4" stroke="#fff" strokeOpacity=".75" paintOrder="stroke" strokeLinejoin="round">
        <tspan fill="#4285f4">G</tspan><tspan fill="#ea4335">o</tspan><tspan fill="#fbbc05">o</tspan>
        <tspan fill="#4285f4">g</tspan><tspan fill="#34a853">l</tspan><tspan fill="#ea4335">e</tspan>
      </text>
    </svg>
  );
}

const Pegman = () => (
  <svg viewBox="0 0 24 40" className="h-10 w-6" stroke="#b97a16" strokeWidth="1">
    <path d="M5 14h14l4 13-3 2-3-8-.5 18h-4L12 27l-.5 12h-4L7 21l-3 8-3-2z" fill="#fbb12f" />
    <circle cx="12" cy="7.500" r="6.500" fill="#fbc02d" />
    <path d="M8 14h8l-4 7z" fill="#e0761b" stroke="none" />
  </svg>
);

function SitesMap() {
  return (
    <div className="relative mt-20 h-[700px] w-[1600px] shrink-0 overflow-hidden font-[Roboto,sans-serif]">
      <MapCanvas />
      <div className="absolute left-5 top-5 flex h-[58px] w-[186px] items-center rounded-[4px] bg-white text-[22px] leading-[26px] shadow-[0_2px_5px_rgba(0,0,0,0.3)]">
        <div className="flex h-full w-[74px] items-center justify-center border-r border-[#e4e4e4] pb-px pl-px font-medium text-black">Map</div>
        <div className="flex flex-1 items-center justify-center pb-px text-[#565656]">Satellite</div>
      </div>
      <div className="absolute left-[1524px] top-[466px] flex h-14 w-14 items-center justify-center rounded-[4px] bg-white pb-1 shadow-[0_2px_5px_rgba(0,0,0,0.3)]">
        <Pegman />
      </div>
      <div className="absolute left-[1524px] top-[542px] flex h-[110px] w-14 flex-col items-center rounded-[4px] bg-white shadow-[0_2px_5px_rgba(0,0,0,0.3)]">
        <svg viewBox="0 0 56 54" className="h-[54px] w-14" fill="none" stroke="#666" strokeWidth="5">
          <path d="M18.500 27h20M28.500 17v20" />
        </svg>
        <div className="h-[2px] w-[38px] shrink-0 bg-[#e6e6e6]" />
        <svg viewBox="0 0 56 54" className="h-[54px] w-14" fill="none" stroke="#666" strokeWidth="5">
          <path d="M18.500 27h20" />
        </svg>
      </div>
      <div className="absolute bottom-0 right-0 flex h-7 w-[664px] items-center whitespace-nowrap bg-[#f5f5f5]/70 pb-[2px] pl-[9px] text-[20px] leading-[26px] text-[#444]">
        <span className="w-[301px]">Map data ©2017 Google, INEGI</span>
        <span className="w-[84px]">1000 km</span>
        <span className="mr-[26px] mt-px h-[12px] w-[114px] border-x-4 border-b-4 border-[#666]" />
        <span>Terms of Use</span>
      </div>
    </div>
  );
}

/* ---------- sidebar ---------- */

const BoxHead = ({ children }) => (
  <div className="h-10 bg-[#d5d5d5] text-center font-bold leading-[39px]">{children}</div>
);
const BoxLink = ({ icon, children }) => (
  <div className="flex h-10 items-start gap-2 pl-2 leading-[39px] text-[#0b0080]">
    {icon}
    <span>{children}</span>
  </div>
);
const ReportLink = ({ children }) => (
  <div className="flex h-10 items-start leading-[39px]">
    <span className="w-[15px]">-</span>
    <span className="text-[#36b]">{children}</span>
    <ExternalIcon />
  </div>
);

function Sidebar() {
  return (
    <aside className="mt-[46px] h-[1036px] w-[432px] shrink-0 border-2 border-[#aaa] bg-[#f9f9f9] px-[14px] pt-[15px] text-[24.64px] whitespace-nowrap">
      <div className="text-center text-[30.8px] font-bold leading-9 text-[#0b0080]">Enclave</div>
      <div className="mt-4 flex h-[53px] items-start gap-2 pl-[2px] leading-8 text-[#0b0080]">
        <div className="pt-[5px]"><FolderIcon /></div>
        <span>Package: Enclave Management</span>
      </div>
      <EnclaveMark className="mx-auto mb-3 block h-[252px] w-[240px]" />
      <div className="flex flex-col gap-[10px]">
        <BoxHead>Instance</BoxHead>
        <div className="h-11 bg-white">
          <BoxLink icon={<PlusIcon />}>Add Site</BoxLink>
        </div>
        <BoxHead>Enclaves</BoxHead>
        <div className="h-[124px] bg-white">
          <BoxLink icon={<ListIcon />}>List</BoxLink>
          <BoxLink icon={<SearchIcon />}>Search</BoxLink>
          <BoxLink icon={<PlusIcon />}>Add new</BoxLink>
        </div>
        <BoxHead>Related Data</BoxHead>
        <div className="h-[108px] bg-white pt-[14px]">
          <BoxLink icon={<EnclaveMark className="h-[42px] w-10 shrink-0" />}>Enclaves</BoxLink>
          <BoxLink icon={<GlobeIcon />}>Sites</BoxLink>
        </div>
        <BoxHead>Reports</BoxHead>
        <div className="h-32 bg-white px-[2px] pt-3">
          <ReportLink>Network Infrastructure</ReportLink>
          <div className="my-[10px] h-[2px] bg-[#a2a9b1]" />
          <ReportLink>Enclave Infrastructure</ReportLink>
        </div>
      </div>
    </aside>
  );
}

/* ---------- gantt ---------- */

const MONTHS = ["Jun", "Jul", "Aug", "Sep"];
const BAR = "h-[25px] bg-[linear-gradient(#4f93cd,#5ab8ec_40%,#3f6296)]";

function GanttRow({ left, cells, last, thick }) {
  return (
    <div className={`flex border-[#efefef] ${last ? "" : thick ? "border-b-4" : "border-b-2"}`}>
      <div className="flex h-[38px] w-[1064px] shrink-0 items-center border-r-4 border-[#efefef] pb-[3px]">{left}</div>
      {cells.map((c, i) => (
        <div key={i} className={`flex h-[38px] items-center justify-center border-[#efefef] pb-[3px] ${i < cells.length - 1 ? "w-[74px] border-r-2" : "flex-1"}`}>
          {c}
        </div>
      ))}
    </div>
  );
}

function Gantt() {
  const months = MONTHS.map((m) => <b key={m}>{m}</b>);
  return (
    <div className="mt-[10px] w-[1362px] border-2 border-[#efefef] font-['DejaVu_Sans_Condensed','DejaVu_Sans',sans-serif] text-[17.5px] leading-6 text-[#5f5f5f]">
      <GanttRow
        left={
          <div className="flex items-center pl-[10px]">
            <span className="w-[72px]">Format:</span>
            <span className="w-10">Day</span>
            <span className="mr-[9px] flex h-[26px] w-[63px] items-center justify-center border-2 border-[#ccc] bg-[#dbeafe]">Month</span>
            <span>Quarter</span>
          </div>
        }
        cells={[<b key="y" className="mr-[5px]">2017</b>]}
      />
      <GanttRow left={null} cells={months} thick />
      <GanttRow
        left={<span className="pl-8">FMN Spiral 2 Specification Validation</span>}
        cells={[null, <div key="b" className={`${BAR} mb-[4px] ml-[9px] w-[30px]`} />, null, null]}
      />
      <GanttRow
        left={<span className="pl-8">XMPP PresenceService Exploration</span>}
        cells={[null, null, null, <div key="b" className={`${BAR} mb-[4px] ml-[2px] w-[34px]`} />]}
      />
      <GanttRow left={null} cells={months} last />
    </div>
  );
}

/* ---------- page ---------- */

const H2 = ({ children }) => (
  <h2 className={`h-[98px] border-b-2 border-[#a2a9b1] pt-[41px] text-[46px] leading-[50px] [-webkit-text-stroke:0.4px_#000] ${SERIF}`}>{children}</h2>
);

export default function App() {
  return (
    <div className={`h-[1968px] w-[2932px] bg-white pl-[30px] pr-8 text-[28px] leading-8 text-black ${SANS}`}>
      <h1 className={`h-[88px] border-b-2 border-[#a2a9b1] pt-3 text-[61px] leading-[70px] [-webkit-text-stroke:0.5px_#000] ${SERIF}`}>Blue Enclave</h1>
      <div className="flex items-start gap-6">
        <main className="w-[2414px] shrink-0">
          <InfoTable />
          <H2>Map</H2>
          <div className="flex items-start">
            <div className="w-[814px] shrink-0 pt-[33px]">
              <h3 className="text-[33.6px] font-bold leading-10">Sites</h3>
              <ul className="mt-[13px]">
                {SITES.map(([site]) => (
                  <li key={site} className="flex h-[47px] items-center text-[#0b0080]">
                    <span className="ml-5 mr-[14px] mt-[6px] h-[10px] w-[10px] rounded-full bg-[#0b568f]" />
                    {site}
                  </li>
                ))}
              </ul>
            </div>
            <SitesMap />
          </div>
        </main>
        <Sidebar />
      </div>
      <H2>Gantt Chart</H2>
      <Gantt />
    </div>
  );
}
